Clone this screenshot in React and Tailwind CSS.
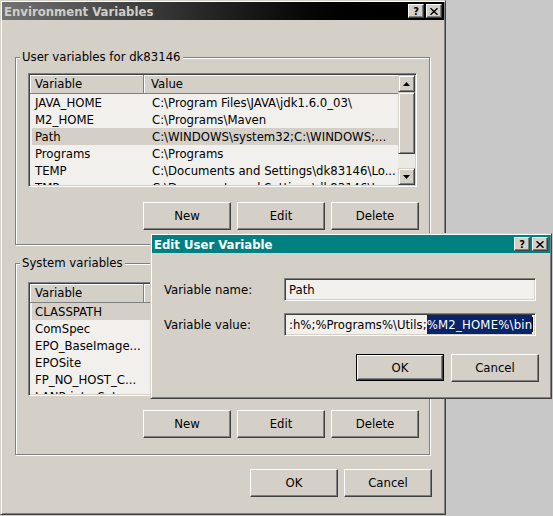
import React from 'react';

// classic Win2000 bevels
const raised =
  'border border-t-white border-l-white border-r-[#404040] border-b-[#404040] shadow-[inset_-1px_-1px_0_#808080]';
const raisedThick =
  'border border-t-[#d4d0c8] border-l-[#d4d0c8] border-r-[#404040] border-b-[#404040] shadow-[inset_1px_1px_0_#fff,inset_-1px_-1px_0_#808080]';
const sunken =
  'border border-t-[#808080] border-l-[#808080] border-r-white border-b-white p-px shadow-[inset_1px_1px_0_#404040,inset_-1px_-1px_0_#d4d0c8]';

const userVars = [
  ['JAVA_HOME', 'C:\\Program Files\\JAVA\\jdk1.6.0_03\\'],
  ['M2_HOME', 'C:\\Programs\\Maven'],
  ['Path', 'C:\\WINDOWS\\system32;C:\\WINDOWS;...'],
  ['Programs', 'C:\\Programs'],
  ['TEMP', 'C:\\Documents and Settings\\dk83146\\Lo...'],
  ['TMP', 'C:\\Documents and Settings\\dk83146\\Lo...'],
];

const systemVars = [
  ['CLASSPATH', '.;C:\\Program Files\\Java\\jre1.6.0_03\\...'],
  ['ComSpec', 'C:\\WINDOWS\\system32\\cmd.exe'],
  ['EPO_BaseImage...', 'C:\\Program Files\\Network Associates'],
  ['EPOSite', 'DK'],
  ['FP_NO_HOST_C...', 'NO'],
  ['LANPrinterSetup', 'C:\\Programs\\Utils'],
];

const CaptionButtons = () => (
  <div className="flex gap-[2px]">
    <div className={`w-[16px] h-[14px] bg-[#d4d0c8] flex items-center justify-center ${raised}`}>
      <span className="font-bold text-[11px] leading-none text-black">?</span>
    </div>
    <div className={`w-[16px] h-[14px] bg-[#d4d0c8] flex items-center justify-center ${raised}`}>
      <svg width="8" height="7" viewBox="0 0 8 7">
        <path d="M0.5 0.3 L7.5 6.7 M7.5 0.3 L0.5 6.7" stroke="#000" strokeWidth="1.5" />
      </svg>
    </div>
  </div>
);

const Btn = ({ children, isDefault }) =>
  isDefault ? (
    <div className="w-[88px] h-[27px] border border-black">
      <div className={`h-full flex items-center justify-center ${raised}`}>{children}</div>
    </div>
  ) : (
    <div className={`w-[88px] h-[28px] flex items-center justify-center ${raised}`}>{children}</div>
  );

const Arrow = ({ up }) => (
  <svg width="7" height="4" viewBox="0 0 7 4">
    <path d={up ? 'M3.5 0 L7 4 L0 4 Z' : 'M0 0 L7 0 L3.5 4 Z'} fill="#000" />
  </svg>
);

const ListView = ({ rows, selected }) => (
  <div className={`w-[389px] h-[114px] flex bg-[#f1f0ed] ${sunken}`}>
    <div className="flex-1 flex flex-col overflow-hidden">
      <div className="h-[19px] shrink-0 flex bg-[#d4d0c8]">
        <div className="w-[114px] pl-[5px] flex items-center border-r border-b border-r-[#808080] border-b-[#808080] shadow-[inset_1px_1px_0_#fff]">
          Variable
        </div>
        <div className="flex-1 pl-[7px] flex items-center border-b border-b-[#808080] shadow-[inset_1px_1px_0_#fff]">
          Value
        </div>
      </div>
      {rows.map(([name, value], i) => (
        <div
          key={name}
          className={`h-[17px] shrink-0 ml-[2px] flex items-center whitespace-nowrap ${
            i === selected ? 'bg-[#d4d0c8]' : ''
          }`}
        >
          <div className="w-[112px] pl-[3px] overflow-hidden">{name}</div>
          <div className="flex-1 pl-[8px] overflow-hidden">{value}</div>
        </div>
      ))}
    </div>
    <div className="w-[17px] flex flex-col bg-[#ebe9e3]">
      <div className={`h-[17px] bg-[#d4d0c8] flex items-center justify-center ${raisedThick}`}>
        <Arrow up />
      </div>
      <div className={`h-[62px] bg-[#d4d0c8] ${raisedThick}`} />
      <div className="flex-1" />
      <div className={`h-[17px] bg-[#d4d0c8] flex items-center justify-center ${raisedThick}`}>
        <Arrow />
      </div>
    </div>
  </div>
);

const Group = ({ label, className, children }) => (
  <div
    className={`relative ml-[13px] w-[415px] px-[12px] border border-[#808080] shadow-[1px_1px_0_#fff,inset_1px_1px_0_#fff] ${className}`}
  >
    <span className="absolute left-[4px] top-[-9px] px-[2px] leading-[16px] bg-[#d4d0c8]">{label}</span>
    {children}
  </div>
);

const TextBox = ({ children }) => (
  <div className={`w-[252px] h-[23px] bg-[#f1f0ed] overflow-hidden ${sunken}`}>
    <div className="h-full flex items-center pl-[3px] whitespace-nowrap">{children}</div>
  </div>
);

export default function App() {
  return (
    <div className="relative w-[553px] h-[516px] overflow-hidden bg-[#c8c8c8] text-[13px] text-black font-['DejaVu_Sans_Condensed','Liberation_Sans',sans-serif]">
      {/* Environment Variables window */}
      <div className={`w-[446px] h-[515px] flex flex-col bg-[#d4d0c8] ${raisedThick} p-px`}>
        <div className="h-[18px] shrink-0 flex items-center pl-[2px] pr-[2px] bg-linear-to-r from-[#737373] to-black to-90%">
          <span className="flex-1 font-bold text-[#d0cec8] leading-none">Environment Variables</span>
          <CaptionButtons />
        </div>

        <Group label="User variables for dk83146" className="mt-[37px] pt-[15px] pb-[14px]">
          <ListView rows={userVars} selected={2} />
          <div className="flex justify-end gap-[6px] mt-[15px] -mr-[2px]">
            <Btn>New</Btn>
            <Btn>Edit</Btn>
            <Btn>Delete</Btn>
          </div>
        </Group>

        <Group label="System variables" className="mt-[18px] pt-[18px] pb-[16px]">
          <ListView rows={systemVars} selected={0} />
          <div className="flex justify-end gap-[6px] mt-[14px] -mr-[2px]">
            <Btn>New</Btn>
            <Btn>Edit</Btn>
            <Btn>Delete</Btn>
          </div>
        </Group>

        <div className="flex justify-end gap-[6px] mt-[14px] pr-[12px]">
          <Btn>OK</Btn>
          <Btn>Cancel</Btn>
        </div>
      </div>

      {/* Edit User Variable dialog on top */}
      <div className={`absolute left-[150px] top-[233px] w-[402px] h-[166px] flex flex-col bg-[#d4d0c8] ${raisedThick} p-px`}>
        <div className="h-[18px] shrink-0 flex items-center pl-[2px] pr-[2px] bg-[#008080]">
          <span className="flex-1 font-bold text-white leading-none">Edit User Variable</span>
          <CaptionButtons />
        </div>
        <div className="flex flex-col pl-[12px] pt-[25px]">
          <div className="flex items-center">
            <span className="w-[120px]">Variable name:</span>
            <TextBox>Path</TextBox>
          </div>
          <div className="flex items-center mt-[12px]">
            <span className="w-[120px]">Variable value:</span>
            <TextBox>
              <span>:h%;%Programs%\Utils;</span>
              <span className="bg-[#0a246a] text-white tracking-[0.2px]">%M2_HOME%\bin</span>
              <span className="w-px h-[15px] bg-black shrink-0" />
            </TextBox>
          </div>
          <div className="flex justify-end gap-[7px] mt-[18px] pr-[11px]">
            <Btn isDefault>OK</Btn>
            <Btn>Cancel</Btn>
          </div>
        </div>
      </div>
    </div>
  );
}
